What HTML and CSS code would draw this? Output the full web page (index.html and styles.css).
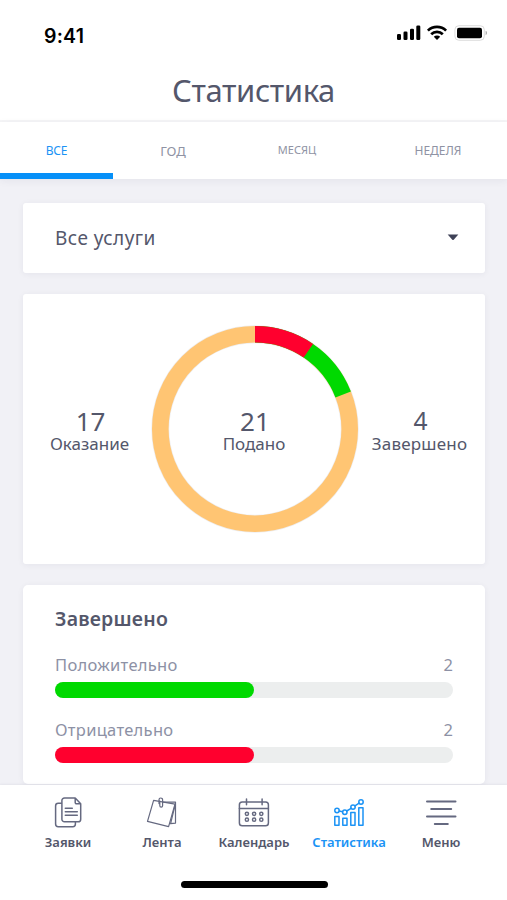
FILE: index.html
```html
<!DOCTYPE html>
<html lang="ru">
<head>
<meta charset="utf-8">
<meta name="viewport" content="width=device-width, initial-scale=1">
<title>Статистика</title>
<link rel="stylesheet" href="styles.css">
</head>
<body>
<div class="screen">
  <div class="status">
    <span class="clock">9:41</span>
    <svg class="status-icons" width="92" height="20" viewBox="0 0 92 20">
      <rect x="1" y="10" width="4" height="6" rx="1.3"/>
      <rect x="7.5" y="7.5" width="4" height="8.5" rx="1.3"/>
      <rect x="14" y="4.7" width="4" height="11.3" rx="1.3"/>
      <rect x="20.3" y="1.5" width="4" height="14.5" rx="1.3"/>
      <g fill="none" stroke="#000" stroke-width="2.7">
        <path d="M31.9 6.6a13 13 0 0 1 18.2 0"/>
        <path d="M35.2 10.3a8.2 8.2 0 0 1 11.6 0"/>
      </g>
      <path d="M37.8 12.7a4.6 4.6 0 0 1 6.4 0L41 16z"/>
      <rect x="58.9" y="1.7" width="29.4" height="14.6" rx="4" fill="none" stroke="#dcdcdc"/>
      <rect x="61" y="3.8" width="25" height="10.4" rx="2"/>
      <path d="M89.6 6.8a2.4 2.4 0 0 1 0 4.4z" fill="#aaa"/>
    </svg>
  </div>
  <header class="header"><h1 class="title">Статистика</h1></header>
  <nav class="tabs">
    <a class="tab tab-all">ВСЕ</a>
    <a class="tab tab-year">ГОД</a>
    <a class="tab tab-month">МЕСЯЦ</a>
    <a class="tab tab-week">НЕДЕЛЯ</a>
  </nav>
  <main class="content">
    <div class="card select">
      <span class="select-label">Все услуги</span>
      <svg width="12" height="7" viewBox="0 0 12 7"><path d="M.7.5h10.6L6.7 5.7a1 1 0 0 1-1.4 0z" fill="#3f4257"/></svg>
    </div>
    <section class="card summary">
      <div class="stat stat-left"><b class="num">17</b><span class="cap">Оказание</span></div>
      <div class="ring">
        <svg class="ring-svg" width="208" height="208" viewBox="-104 -104 208 208">
          <g fill="none" stroke-width="16.6" transform="rotate(-90)">
            <circle r="94.7" stroke="#eeeef0" stroke-width="18"/>
            <circle r="94.7" stroke="#ffc573"/>
            <circle r="94.7" stroke="#00d900" pathLength="21" stroke-dasharray="4 17"/>
            <circle r="94.7" stroke="#ff002e" pathLength="21" stroke-dasharray="2 19"/>
          </g>
        </svg>
        <div class="stat ring-stat"><b class="num">21</b><span class="cap">Подано</span></div>
      </div>
      <div class="stat stat-right"><b class="num num-done">4</b><span class="cap cap-done">Завершено</span></div>
    </section>
    <section class="card done">
      <h2 class="done-title">Завершено</h2>
      <div class="row"><span>Положительно</span><span class="count">2</span></div>
      <div class="bar"><div class="fill good"></div></div>
      <div class="row"><span>Отрицательно</span><span class="count">2</span></div>
      <div class="bar"><div class="fill bad"></div></div>
    </section>
  </main>
  <footer class="bottom">
    <nav class="nav">
      <a class="item item-requests">
        <svg class="icon" width="34" height="34" viewBox="0 0 34 34">
          <path d="M10.4 7.3H7.2a2.6 2.6 0 0 0-2.6 2.6v18.2a2.6 2.6 0 0 0 2.6 2.6h14.6a2.6 2.6 0 0 0 2.6-2.6v-2"/>
          <path d="M24.2 2H13.5a2.6 2.6 0 0 0-2.6 2.6v18.6a2.6 2.6 0 0 0 2.6 2.6h13.6a2.6 2.6 0 0 0 2.6-2.6V7.8zv4.5a1.3 1.3 0 0 0 1.3 1.3h4.2M14.3 12.2h7M14.3 15.8h12M14.3 19.3h12"/>
        </svg>
        <span>Заявки</span>
      </a>
      <a class="item item-feed">
        <svg class="icon thin" width="34" height="34" viewBox="0 0 34 34">
          <path d="M8.6 4.3 30 8.1 23.6 30.7 2.5 25.3z"/>
          <path d="M18 6.2h12.5v20.9l-5 .5M30.3 8.1 25.6 27.6"/>
          <path d="M14 7.6V3.8a1.8 1.8 0 0 1 3.6 0v5.9a1.4 1.4 0 0 1-2.8 0V5"/>
        </svg>
        <span>Лента</span>
      </a>
      <a class="item item-calendar">
        <svg class="icon" width="34" height="34" viewBox="0 0 34 34">
          <rect x="2.4" y="6" width="29" height="23.8" rx="2.8"/>
          <path d="M2.4 12.4h29M9.5 3v5.8M25.1 3v5.8"/>
          <g stroke-width="1.5"><circle cx="9.9" cy="17.8" r="1.6"/><circle cx="17.1" cy="17.8" r="1.6"/><circle cx="24.3" cy="17.8" r="1.6"/><circle cx="9.9" cy="23.7" r="1.6"/><circle cx="17.1" cy="23.7" r="1.6"/><circle cx="24.3" cy="23.7" r="1.6"/></g>
        </svg>
        <span>Календарь</span>
      </a>
      <a class="item item-stats active">
        <svg class="icon" width="34" height="34" viewBox="0 0 34 34">
          <rect x="2.8" y="20.4" width="4.2" height="8.8"/><rect x="10.8" y="22.2" width="4.2" height="7"/><rect x="18.8" y="16.5" width="4.2" height="12.7"/><rect x="26.8" y="11.7" width="4.2" height="17.5"/>
          <circle cx="5" cy="14.5" r="2.2"/><circle cx="12.8" cy="16.2" r="2.2"/><circle cx="21" cy="11.1" r="2.2"/><circle cx="29" cy="6" r="2.2"/>
          <path d="m7.2 15 3.4.7M14.7 15l4.4-2.7M22.9 9.9l4.2-2.7"/>
        </svg>
        <span>Статистика</span>
      </a>
      <a class="item item-menu">
        <svg class="icon menu-lines" width="34" height="34" viewBox="0 0 34 34"><path d="M3 5.5h28.5M7.2 13h20M3 20.5h28.5M10.8 28h13"/></svg>
        <span>Меню</span>
      </a>
    </nav>
    <div class="home"></div>
  </footer>
</div>
</body>
</html>
```

FILE: styles.css
```css
* { box-sizing: border-box; }
body { margin: 0; background: #f1f1f6; font-family: "Noto Sans", "Open Sans", sans-serif; color: #54576b; }
.screen { width: 507px; height: 900px; display: flex; flex-direction: column; overflow: hidden; }
.status { height: 60px; flex: none; background: #fff; display: flex; justify-content: space-between; padding: 24px 19px 0 44px; }
.clock { font: 600 19.5px/25px Inter, sans-serif; letter-spacing: .2px; color: #000; }
.status-icons { display: block; }
.header { height: 62px; flex: none; background: #fff; border-bottom: 2px solid #f5f5f7; display: flex; justify-content: center; }
.title { margin: 0; font-size: 31px; font-weight: 400; line-height: 60px; letter-spacing: -.4px; }
.tabs { height: 57px; flex: none; background: #fff; display: flex; box-shadow: 0 2px 8px rgba(40, 40, 70, .06); }
.tab { text-align: center; font-size: 12px; line-height: 57px; color: #8f93a4; }
.tab-all { width: 113px; color: #1b93f5; border-bottom: 6px solid #0690f8; letter-spacing: -.2px; }
.tab-year { width: 120px; font-size: 13px; line-height: 59px; }
.tab-month { width: 128px; font-size: 11px; line-height: 55px; }
.tab-week { width: 146px; padding-left: 8px; }
.content { flex: 1; min-height: 0; padding: 23.5px 22px 0 23px; display: flex; flex-direction: column; gap: 21.5px; }
.card { flex: none; background: #fff; border-radius: 3px; box-shadow: 0 1px 6px rgba(40, 40, 70, .06); }
.select { height: 70px; display: flex; align-items: center; justify-content: space-between; padding: 0 26px 0 32px; }
.select-label { font-size: 19px; line-height: 26px; letter-spacing: .45px; padding-top: 1px; }
.summary { height: 269.5px; display: grid; grid-template-columns: 128px 208px 127px; align-items: center; }
.stat { display: flex; flex-direction: column; align-items: center; padding-top: 4px; }
.stat-left { padding-left: 5px; }
.stat-right { padding-right: 6px; }
.num { font-size: 26px; font-weight: 400; line-height: 27px; padding-left: 2px; }
.num-done { font-size: 24.5px; line-height: 26px; padding-bottom: 1px; }
.cap { font-size: 17px; line-height: 18px; }
.cap-done { letter-spacing: .2px; }
.ring { position: relative; height: 208px; display: flex; align-items: center; justify-content: center; }
.ring-svg { position: absolute; inset: 0; }
.ring-stat { padding-right: 2px; }
.done { height: 199px; border-radius: 5px; padding: 20px 32px 0; }
.done-title { margin: 0 0 19px; font-size: 19.5px; line-height: 28px; font-weight: 600; letter-spacing: .2px; }
.row { display: flex; justify-content: space-between; font-size: 16.5px; line-height: 26px; letter-spacing: .3px; color: #8d91a5; }
.count { letter-spacing: 0; }
.bar { height: 16px; margin: 4px 0 19px; border-radius: 8px; background: #eceeee; }
.fill { width: 50%; height: 100%; border-radius: 8px; }
.good { background: #00d900; }
.bad { background: #ff002e; }
.bottom { flex: none; height: 115px; background: #fff; display: flex; flex-direction: column; align-items: center; box-shadow: 0 -1px 2px rgba(40, 40, 70, .06); }
.nav { width: 507px; height: 96px; display: flex; padding: 11px 20px 0; }
.item { display: flex; flex-direction: column; align-items: center; font-size: 13px; line-height: 18px; font-weight: 600; gap: 3px; }
.item-requests { width: 96px; }
.item-feed { width: 92px; }
.item-calendar { width: 92px; }
.item-stats { width: 98px; }
.item-menu { width: 86px; }
.icon { display: block; fill: none; stroke: #656980; stroke-width: 1.5; stroke-linejoin: round; stroke-linecap: round; }
.thin { stroke-width: 1.2; }
.menu-lines { stroke-width: 2; }
.active { color: #1b93f5; }
.active .icon { stroke: #1b93f5; }
.home { width: 147px; height: 7px; border-radius: 4px; background: #000; margin-left: 2px; }
```
